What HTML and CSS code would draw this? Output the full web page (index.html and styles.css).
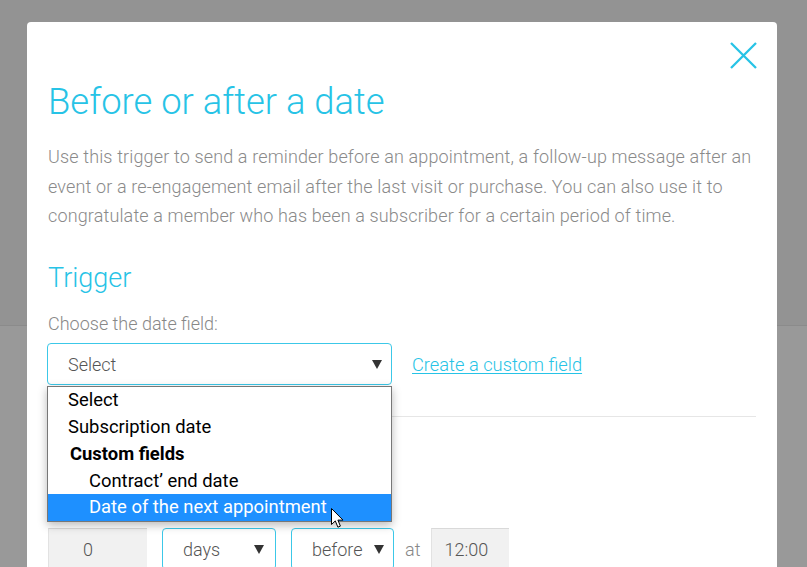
FILE: index.html
```html
<!DOCTYPE html>
<html lang="en">
<head>
<meta charset="utf-8">
<title>Before or after a date</title>
<link rel="stylesheet" href="styles.css">
</head>
<body>
<div class="modal">
  <div class="modal-head">
    <button class="close" aria-label="Close">
      <svg width="27" height="27" viewBox="0 0 27 27"><path d="M1 1 L26 26 M26 1 L1 26" stroke="#27c3e6" stroke-width="2.3" fill="none"/></svg>
    </button>
  </div>
  <h1 class="title">Before or after a date</h1>
  <p class="intro">Use this trigger to send a reminder before an appointment, a follow-up message after an event or a re-engagement email after the last visit or purchase. You can also use it to congratulate a member who has been a subscriber for a certain period of time.</p>
  <h2 class="section-title">Trigger</h2>
  <div class="field-label">Choose the date field:</div>
  <div class="field-row">
    <div class="select-wrap">
      <div class="select main-select"><span>Select</span><span class="caret"></span></div>
      <ul class="dropdown">
        <li class="opt">Select</li>
        <li class="opt">Subscription date</li>
        <li class="group">Custom fields</li>
        <li class="opt nested">Contract’ end date</li>
        <li class="opt nested active">Date of the next appointment</li>
      </ul>
    </div>
    <a class="link" href="#">Create a custom field</a>
  </div>
  <div class="divider"></div>
  <div class="delay-row">
    <div class="input num">0</div>
    <div class="select small days"><span>days</span><span class="caret"></span></div>
    <div class="select small when"><span>before</span><span class="caret"></span></div>
    <span class="at">at</span>
    <div class="input time">12:00</div>
  </div>
</div>
<svg class="cursor" width="13" height="21" viewBox="0 0 13 21"><path d="M0.5 0.5 L0.5 16.5 L4.3 12.9 L6.9 19.2 L9.4 18.1 L6.9 12.1 L12 12.1 Z" fill="#fff" stroke="#000" stroke-width="1" stroke-linejoin="round"/></svg>
</body>
</html>
```
FILE: styles.css
```css
html, body {
  margin: 0;
  padding: 0;
  height: 567px;
  overflow: hidden;
}
body {
  background: linear-gradient(to bottom, #939393 0, #939393 325px, #8b8b8b 325px, #8b8b8b 326px, #999999 326px);
  font-family: Roboto, "Noto Sans", sans-serif;
  position: relative;
}
.modal {
  margin: 22px 0 0 27px;
  width: 750px;
  box-sizing: border-box;
  background: #fff;
  border-radius: 4px;
  padding: 20px 21px 40px 21px;
  min-height: 600px;
}
.modal-head {
  display: flex;
  justify-content: flex-end;
  height: 26px;
}
.close {
  border: 0;
  background: none;
  padding: 0;
  width: 27px;
  height: 27px;
  margin-right: -1px;
  cursor: pointer;
}
.close svg { display: block; }
.title {
  margin: 13px 0 0 0;
  font-size: 36.4px;
  line-height: 42px;
  font-weight: 300;
  color: #27c3e6;
}
.intro {
  margin: 19px 0 0 0;
  font-size: 18px;
  letter-spacing: 0.14px;
  line-height: 29.6px;
  font-weight: 300;
  color: #8a8a8a;
}
.section-title {
  margin: 31px 0 0 0;
  font-size: 27px;
  line-height: 32px;
  font-weight: 300;
  color: #27c3e6;
}
.field-label {
  margin-top: 19px;
  font-size: 18px;
  line-height: 21px;
  font-weight: 300;
  color: #888;
}
.field-row {
  margin-top: 9.5px;
  display: flex;
  align-items: center;
  gap: 20px;
}
.select-wrap {
  position: relative;
  margin-left: -1px;
}
.select {
  box-sizing: border-box;
  height: 42px;
  border: 1px solid #3cc8e8;
  border-radius: 4px;
  display: flex;
  align-items: center;
  justify-content: space-between;
  font-size: 18px;
  line-height: 21px;
  font-weight: 300;
  color: #555;
  background: #fff;
}
.main-select {
  width: 345px;
  padding: 0 9px 0 20px;
}
.caret {
  width: 0;
  height: 0;
  border-left: 5px solid transparent;
  border-right: 5px solid transparent;
  border-top: 9px solid #333;
}
.dropdown {
  position: absolute;
  left: 0;
  top: 43px;
  width: 345px;
  box-sizing: border-box;
  margin: 0;
  padding: 0;
  list-style: none;
  background: #fff;
  border: 1px solid #777;
  box-shadow: 0 3px 9px rgba(0, 0, 0, 0.28);
  z-index: 5;
  font-size: 18.4px;
  color: #000;
}
.dropdown li {
  height: 26.8px;
  line-height: 26.8px;
  padding-left: 20px;
  white-space: nowrap;
}
.dropdown .group {
  font-weight: 700;
  padding-left: 22px;
}
.dropdown .nested {
  padding-left: 41px;
}
.dropdown .active {
  background: #1e90ff;
  color: #fff;
}
.link {
  color: #27c3e6;
  font-size: 18.3px;
  font-weight: 300;
  text-decoration: underline;
  text-underline-offset: 2px;
}
.divider {
  margin-top: 31px;
  height: 1px;
  background: #e6e6e6;
}
.delay-row {
  margin-top: 111px;
  display: flex;
  align-items: center;
}
.input {
  box-sizing: border-box;
  height: 42px;
  background: #f1f1f1;
  border-top: 1px solid #d9d9d9;
  border-left: 1px solid #e2e2e2;
  display: flex;
  align-items: center;
  font-size: 18px;
  font-weight: 300;
  color: #555;
}
.num {
  width: 99px;
  justify-content: center;
  padding-right: 20px;
}
.small {
  padding: 0 11px 0 20px;
}
.days {
  width: 114px;
  margin-left: 15px;
}
.when {
  width: 103px;
  margin-left: 15px;
  padding-right: 9px;
}
.at {
  margin-left: 11px;
  font-size: 18px;
  font-weight: 300;
  color: #888;
}
.time {
  width: 78px;
  margin-left: 11px;
  padding-left: 12px;
}
.cursor {
  position: absolute;
  left: 331px;
  top: 508px;
  z-index: 10;
}
```
